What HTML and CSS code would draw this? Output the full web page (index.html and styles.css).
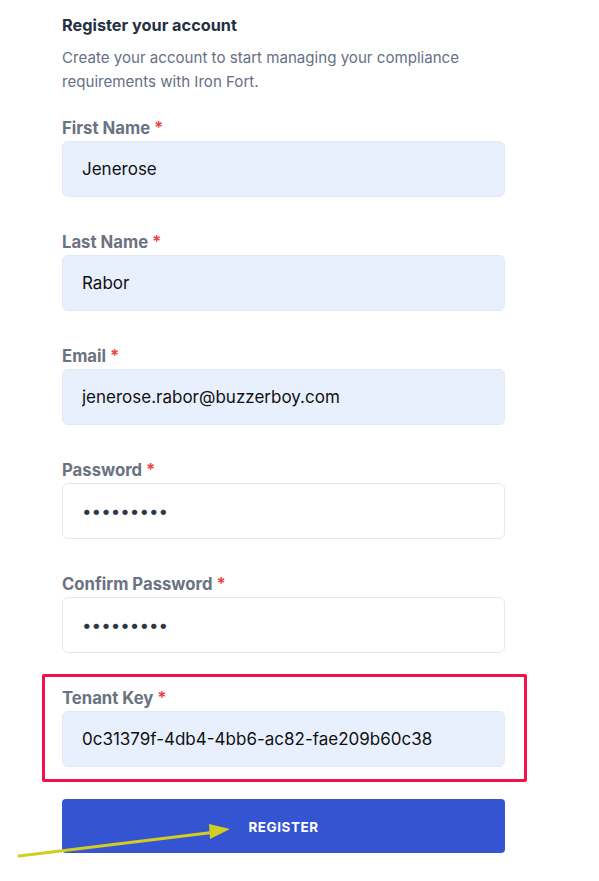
FILE: index.html
```html
<!DOCTYPE html>
<html lang="en">
<head>
<meta charset="utf-8">
<title>Register your account</title>
<link rel="stylesheet" href="styles.css">
</head>
<body>
<main class="page">
  <form class="form">
    <h1 class="title">Register your account</h1>
    <p class="lead">Create your account to start managing your compliance requirements with Iron Fort.</p>

    <div class="field">
      <label class="label">First Name <span class="req">*</span></label>
      <input class="input filled" type="text" value="Jenerose" readonly>
    </div>
    <div class="field">
      <label class="label">Last Name <span class="req">*</span></label>
      <input class="input filled" type="text" value="Rabor" readonly>
    </div>
    <div class="field">
      <label class="label">Email <span class="req">*</span></label>
      <input class="input filled" type="text" value="jenerose.rabor@buzzerboy.com" readonly>
    </div>
    <div class="field">
      <label class="label">Password <span class="req">*</span></label>
      <div class="input secret"><span class="dots">•••••••••</span></div>
    </div>
    <div class="field">
      <label class="label">Confirm Password <span class="req">*</span></label>
      <div class="input secret"><span class="dots">•••••••••</span></div>
    </div>
    <div class="field highlighted">
      <label class="label">Tenant Key <span class="req">*</span></label>
      <input class="input filled" type="text" value="0c31379f-4db4-4bb6-ac82-fae209b60c38" readonly>
    </div>

    <button class="submit" type="button">REGISTER</button>
  </form>

  <svg class="arrow" width="240" height="40" viewBox="0 0 240 40" aria-hidden="true">
    <line x1="19" y1="32" x2="212" y2="8.5" stroke="#d2cd22" stroke-width="3.2" stroke-linecap="round"/>
    <polygon points="209,0 230,5 210,15" fill="#d2cd22"/>
  </svg>
</main>
</body>
</html>
```

FILE: styles.css
```css
* { box-sizing: border-box; }

html, body {
  margin: 0;
  padding: 0;
  background: #ffffff;
}

body {
  font-family: Inter, "Noto Sans", "Liberation Sans", sans-serif;
  color: #1f2937;
}

.page {
  position: relative;
  width: 599px;
  min-height: 881px;
}

.form {
  width: 443px;
  margin-left: 62px;
  padding-top: 13px;
  display: flex;
  flex-direction: column;
}

.title {
  margin: 0;
  font-size: 16.3px;
  line-height: 24px;
  font-weight: 700;
  color: #243141;
}

.lead {
  margin: 9px 0 21px;
  font-size: 15.1px;
  line-height: 24px;
  color: #667085;
}

.field {
  position: relative;
  display: flex;
  flex-direction: column;
  gap: 2px;
  margin-bottom: 32px;
}

.label {
  font-size: 16.7px;
  line-height: 22px;
  padding-top: 2px;
  font-weight: 700;
  color: #6b7280;
}

.req {
  color: #ef4444;
}

.input {
  width: 100%;
  height: 56px;
  padding: 0 19px;
  border: 1px solid #e5e7eb;
  border-radius: 6px;
  background: #ffffff;
  font-family: Inter, "Noto Sans", "Liberation Sans", sans-serif;
  font-size: 17px;
  color: #111111;
  outline: none;
}

.input.filled {
  background: #e8f0fe;
  border-color: #e3e9f3;
}

.secret {
  display: flex;
  align-items: center;
}

.dots {
  font-size: 17px;
  letter-spacing: 0;
  color: #2d3748;
}

.highlighted::before {
  content: "";
  position: absolute;
  left: -20px;
  right: -22px;
  top: -11px;
  bottom: -15px;
  border: 3px solid #f50f4b;
  border-radius: 2px;
  pointer-events: none;
}

.submit {
  height: 54px;
  border: 0;
  border-radius: 4px;
  background: #3554d1;
  color: #ffffff;
  font-family: Inter, "Noto Sans", "Liberation Sans", sans-serif;
  font-size: 13.4px;
  font-weight: 700;
  letter-spacing: 0.6px;
  padding-top: 2px;
}

.arrow {
  position: absolute;
  left: 0;
  top: 824px;
}
```
